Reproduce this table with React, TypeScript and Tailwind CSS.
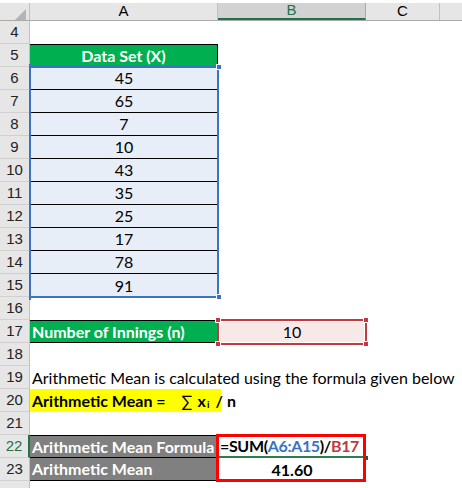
import React from "react";

const FONT = { fontFamily: "Lato, 'Open Sans', sans-serif" };
const HFONT = { fontFamily: "'Liberation Sans', Arial, sans-serif" };

function RowHead({ n, active }: { n?: number; active?: boolean }) {
  return (
    <div
      className={`w-[30px] h-full shrink-0 bg-[#e6e6e6] border-b border-b-[#d0d0d0] border-r flex items-center justify-center text-[15px] ${
        active ? "border-r-[#217346] border-r-2 text-[#217346]" : "border-r-[#c0c0c0] text-[#222]"
      }`}
      style={HFONT}
    >
      {n}
    </div>
  );
}

function Row({ n, active, children }: { n?: number; active?: boolean; children?: React.ReactNode }) {
  return (
    <div className="flex h-[23px] shrink-0">
      <RowHead n={n} active={active} />
      {children}
    </div>
  );
}

export default function App() {
  const data = [45, 65, 7, 10, 43, 35, 25, 17, 78, 91];
  return (
    <div className="relative w-[462px] h-[488px] overflow-hidden bg-white text-black" style={FONT}>
      <div className="h-[3px] bg-white" />
      {/* column headers */}
      <div className="flex h-[18px] bg-[#e6e6e6] border-b border-b-[#ababab]" style={HFONT}>
        <div className="relative w-[30px] shrink-0 border-r border-r-[#c0c0c0]">
          <svg className="absolute left-[15px] top-[6px]" width="11" height="11" viewBox="0 0 11 11">
            <polygon points="11,0 11,11 0,11" fill="#b4b4b4" />
          </svg>
        </div>
        <div className="w-[188px] shrink-0 flex items-center justify-center text-[15px] border-r border-r-[#c0c0c0]">A</div>
        <div className="w-[148px] shrink-0 flex items-center justify-center text-[15px] bg-[#d2d2d2] text-[#217346] border-b-2 border-b-[#217346] border-r border-r-[#a8a8a8]">
          B
        </div>
        <div className="w-[74px] shrink-0 flex items-center justify-center text-[15px] border-r border-r-[#c0c0c0]">C</div>
        <div className="flex-1" />
      </div>

      <div className="flex flex-col text-[16px]">
        <Row n={4} />
        <Row n={5}>
          <div className="w-[188px] shrink-0 bg-[#00b050] border-t border-t-black border-r border-r-black text-white font-bold flex items-center justify-center">
            Data Set (X)
          </div>
        </Row>
        {data.map((v, i) => (
          <Row key={i} n={6 + i}>
            <div
              className={`w-[188px] shrink-0 bg-[#e8eef8] flex items-center justify-center ${
                i < data.length - 1 ? "border-b border-b-black" : ""
              }`}
            >
              {v}
            </div>
          </Row>
        ))}
        <Row n={16} />
        <Row n={17}>
          <div className="w-[188px] shrink-0 bg-[#00b050] border-y border-y-black text-white font-bold flex items-center pl-[2px] whitespace-nowrap">
            Number of Innings (n)
          </div>
          <div className="w-[148px] shrink-0 bg-[#f8e9e9] flex items-center justify-center">10</div>
        </Row>
        <Row n={18} />
        <Row n={19}>
          <div className="flex items-center pl-[2px] whitespace-nowrap">
            Arithmetic Mean is calculated using the formula given below
          </div>
        </Row>
        <Row n={20}>
          <div className="w-[191px] shrink-0 bg-[#ffff00] font-bold flex items-center pl-[2px] whitespace-nowrap">
            <span>Arithmetic Mean =</span>
            <span className="ml-[16px] font-normal">∑</span>
            <span className="ml-[5px]">x</span>
            <span className="text-[10px] relative top-[4px] ml-[1px]">i</span>
            <span className="ml-[6px]">/</span>
            <span className="ml-[4px]">n</span>
          </div>
        </Row>
        <Row n={21} />
        <Row n={22} active>
          <div className="w-[188px] shrink-0 bg-[#808080] border-t border-t-black border-b border-b-black text-white font-bold flex items-center pl-[2px] whitespace-nowrap">
            Arithmetic Mean Formula
          </div>
          <div className="w-[148px] shrink-0 font-bold flex items-center pl-[2px] whitespace-nowrap border-b-2 border-b-[#2e7d4f] overflow-hidden tracking-[-0.35px]">
            =SUM(<span className="text-[#3a72c4]">A6:A15</span>)/<span className="text-[#c0393f]">B17</span>
          </div>
        </Row>
        <Row n={23}>
          <div className="w-[188px] shrink-0 bg-[#808080] border-b border-b-black text-white font-bold flex items-center pl-[2px] whitespace-nowrap">
            Arithmetic Mean
          </div>
          <div className="w-[148px] shrink-0 font-bold flex items-center justify-center">41.60</div>
        </Row>
        <Row />
      </div>

      {/* blue selection A6:A15 */}
      <div className="absolute left-[29px] top-[66px] w-[190px] h-[232px] border-2 border-[#3a72c4]" />
      <div className="absolute left-[216px] top-[64px] w-[6px] h-[6px] bg-[#3a72c4] border border-white" />
      <div className="absolute left-[216px] top-[294px] w-[6px] h-[6px] bg-[#3a72c4] border border-white" />
      <div className="absolute left-[29px] top-[64px] w-[2px] h-[6px] bg-[#3a72c4]" />
      <div className="absolute left-[29px] top-[294px] w-[2px] h-[6px] bg-[#3a72c4]" />

      {/* red reference B17 */}
      <div className="absolute left-[217px] top-[319px] w-[150px] h-[26px] border-2 border-[#c4383f]" />
      <div className="absolute left-[219px] top-[321px] w-[146px] h-[22px] border border-white" />
      <div className="absolute left-[215px] top-[317px] w-[6px] h-[6px] bg-[#c4383f] border border-white" />
      <div className="absolute left-[363px] top-[317px] w-[6px] h-[6px] bg-[#c4383f] border border-white" />
      <div className="absolute left-[215px] top-[341px] w-[6px] h-[6px] bg-[#c4383f] border border-white" />
      <div className="absolute left-[363px] top-[341px] w-[6px] h-[6px] bg-[#c4383f] border border-white" />

      {/* active cell corner */}
      <div className="absolute left-[364px] top-[456px] w-[4px] h-[4px] bg-[#2e4f3a]" />

      {/* bright red box B22:B23 */}
      <div className="absolute left-[216px] top-[434px] w-[150px] h-[48px] border-[3px] border-[#ff0000]" />
    </div>
  );
}
